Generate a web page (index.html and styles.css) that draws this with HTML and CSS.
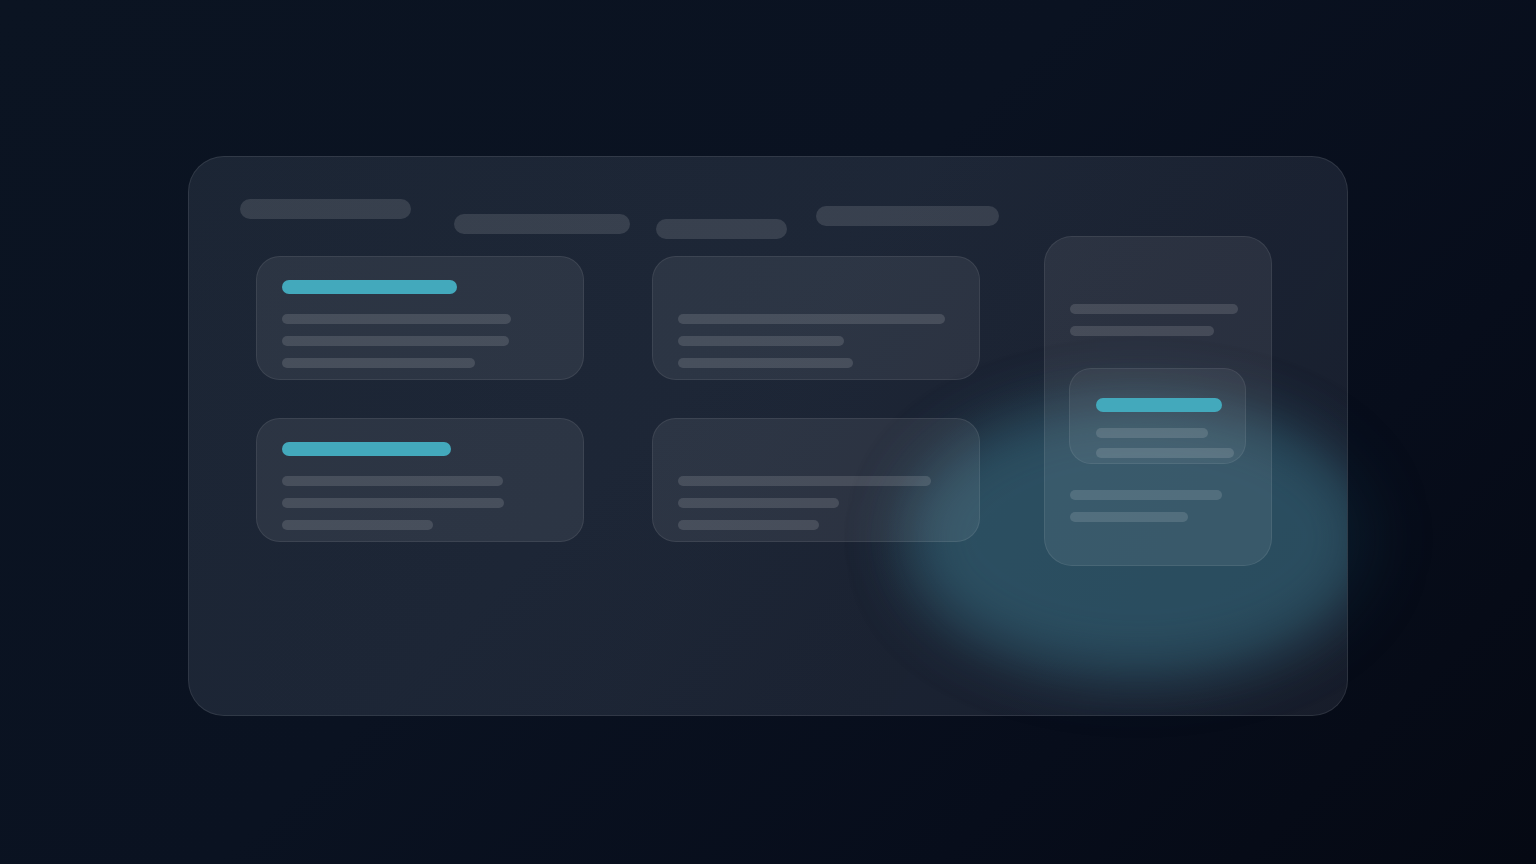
FILE: index.html
```html
<!DOCTYPE html>
<html lang="en">
<head>
<meta charset="utf-8">
<title>Dashboard skeleton</title>
<link rel="stylesheet" href="styles.css">
</head>
<body>
<div class="page">
  <div class="glow-outer"></div>
  <section class="panel">
    <div class="glow"></div>
    <header class="header">
      <span class="pill pill-1"></span>
      <span class="pill pill-2"></span>
      <span class="pill pill-3"></span>
      <span class="pill pill-4"></span>
    </header>
    <div class="content">
      <div class="grid">
        <div class="card">
          <span class="accent" style="width:175px"></span>
          <span class="line" style="width:229px"></span>
          <span class="line" style="width:227px"></span>
          <span class="line" style="width:193px"></span>
        </div>
        <div class="card no-title">
          <span class="line" style="width:267px"></span>
          <span class="line" style="width:166px"></span>
          <span class="line" style="width:175px"></span>
        </div>
        <div class="card">
          <span class="accent" style="width:169px"></span>
          <span class="line" style="width:221px"></span>
          <span class="line" style="width:222px"></span>
          <span class="line" style="width:151px"></span>
        </div>
        <div class="card no-title">
          <span class="line" style="width:253px"></span>
          <span class="line" style="width:161px"></span>
          <span class="line" style="width:141px"></span>
        </div>
      </div>
      <aside class="side">
        <div class="side-lines">
          <span class="line" style="width:168px"></span>
          <span class="line" style="width:144px"></span>
        </div>
        <div class="inner">
          <span class="accent" style="width:126px"></span>
          <span class="line" style="width:112px"></span>
          <span class="line" style="width:138px"></span>
        </div>
        <div class="side-lines">
          <span class="line" style="width:152px"></span>
          <span class="line" style="width:118px"></span>
        </div>
      </aside>
    </div>
  </section>
</div>
</body>
</html>
```
FILE: styles.css
```css
html, body {
  margin: 0;
  height: 100%;
}
body {
  background: linear-gradient(135deg, #0b1422 0%, #0a1221 45%, #070d1b 75%, #050913 100%);
  overflow: hidden;
  font-family: "Inter", "Liberation Sans", sans-serif;
}
.page {
  position: relative;
  height: 864px;
  display: flex;
  justify-content: center;
  align-items: flex-start;
  padding-top: 156px;
  box-sizing: border-box;
}
.glow-outer {
  position: absolute;
  left: 906px;
  top: 400px;
  width: 466px;
  height: 276px;
  border-radius: 50%;
  background: rgba(20, 75, 95, 0.22);
  filter: blur(30px);
  z-index: 0;
}
.panel {
  position: relative;
  z-index: 1;
  overflow: hidden;
  width: 1160px;
  height: 560px;
  box-sizing: border-box;
  border-radius: 36px;
  border: 1px solid rgba(255, 255, 255, 0.09);
  background: linear-gradient(120deg, rgba(148, 163, 184, 0.13) 0%, rgba(148, 163, 184, 0.145) 50%, rgba(140, 150, 175, 0.13) 100%);
  padding: 42px 0 0 51px;
}
.glow {
  position: absolute;
  left: 717px;
  top: 243px;
  width: 466px;
  height: 276px;
  border-radius: 50%;
  background: rgba(58, 110, 128, 0.52);
  filter: blur(28px);
  z-index: 0;
  pointer-events: none;
}
.header, .content {
  position: relative;
  z-index: 1;
}
.header {
  display: flex;
  align-items: flex-start;
  height: 37px;
}
.pill {
  display: block;
  height: 20px;
  border-radius: 10px;
  background: rgba(255, 255, 255, 0.12);
}
.pill-1 { width: 171px; }
.pill-2 { width: 176px; margin-top: 15px; margin-left: 43px; }
.pill-3 { width: 131px; margin-top: 20px; margin-left: 26px; }
.pill-4 { width: 183px; margin-top: 7px; margin-left: 29px; }

.content {
  display: flex;
  align-items: flex-start;
  margin-left: 16px;
}
.grid {
  display: grid;
  grid-template-columns: 328px 328px;
  column-gap: 68px;
  row-gap: 38px;
  margin-top: 20px;
}
.card {
  height: 124px;
  box-sizing: border-box;
  border-radius: 24px;
  border: 1px solid rgba(255, 255, 255, 0.08);
  background: rgba(255, 255, 255, 0.07);
  padding: 23px 25px 0;
  display: flex;
  flex-direction: column;
  gap: 12px;
}
.card.no-title {
  padding-top: 57px;
}
.accent {
  display: block;
  height: 14px;
  border-radius: 7px;
  background: #43a9bc;
  margin-bottom: 8px;
}
.line {
  display: block;
  height: 10px;
  border-radius: 5px;
  background: rgba(255, 255, 255, 0.13);
}
.side {
  width: 228px;
  height: 330px;
  box-sizing: border-box;
  margin-left: 64px;
  border-radius: 28px;
  border: 1px solid rgba(255, 255, 255, 0.08);
  background: rgba(255, 255, 255, 0.07);
  padding: 67px 0 0 25px;
  display: flex;
  flex-direction: column;
}
.side-lines {
  display: flex;
  flex-direction: column;
  gap: 12px;
}
.inner {
  width: 177px;
  height: 96px;
  box-sizing: border-box;
  margin: 32px 0 26px -1px;
  border-radius: 22px;
  border: 1px solid rgba(255, 255, 255, 0.07);
  background: rgba(255, 255, 255, 0.06);
  padding: 29px 0 0 26px;
  display: flex;
  flex-direction: column;
  gap: 10px;
}
.inner .accent {
  margin-bottom: 6px;
}
```
